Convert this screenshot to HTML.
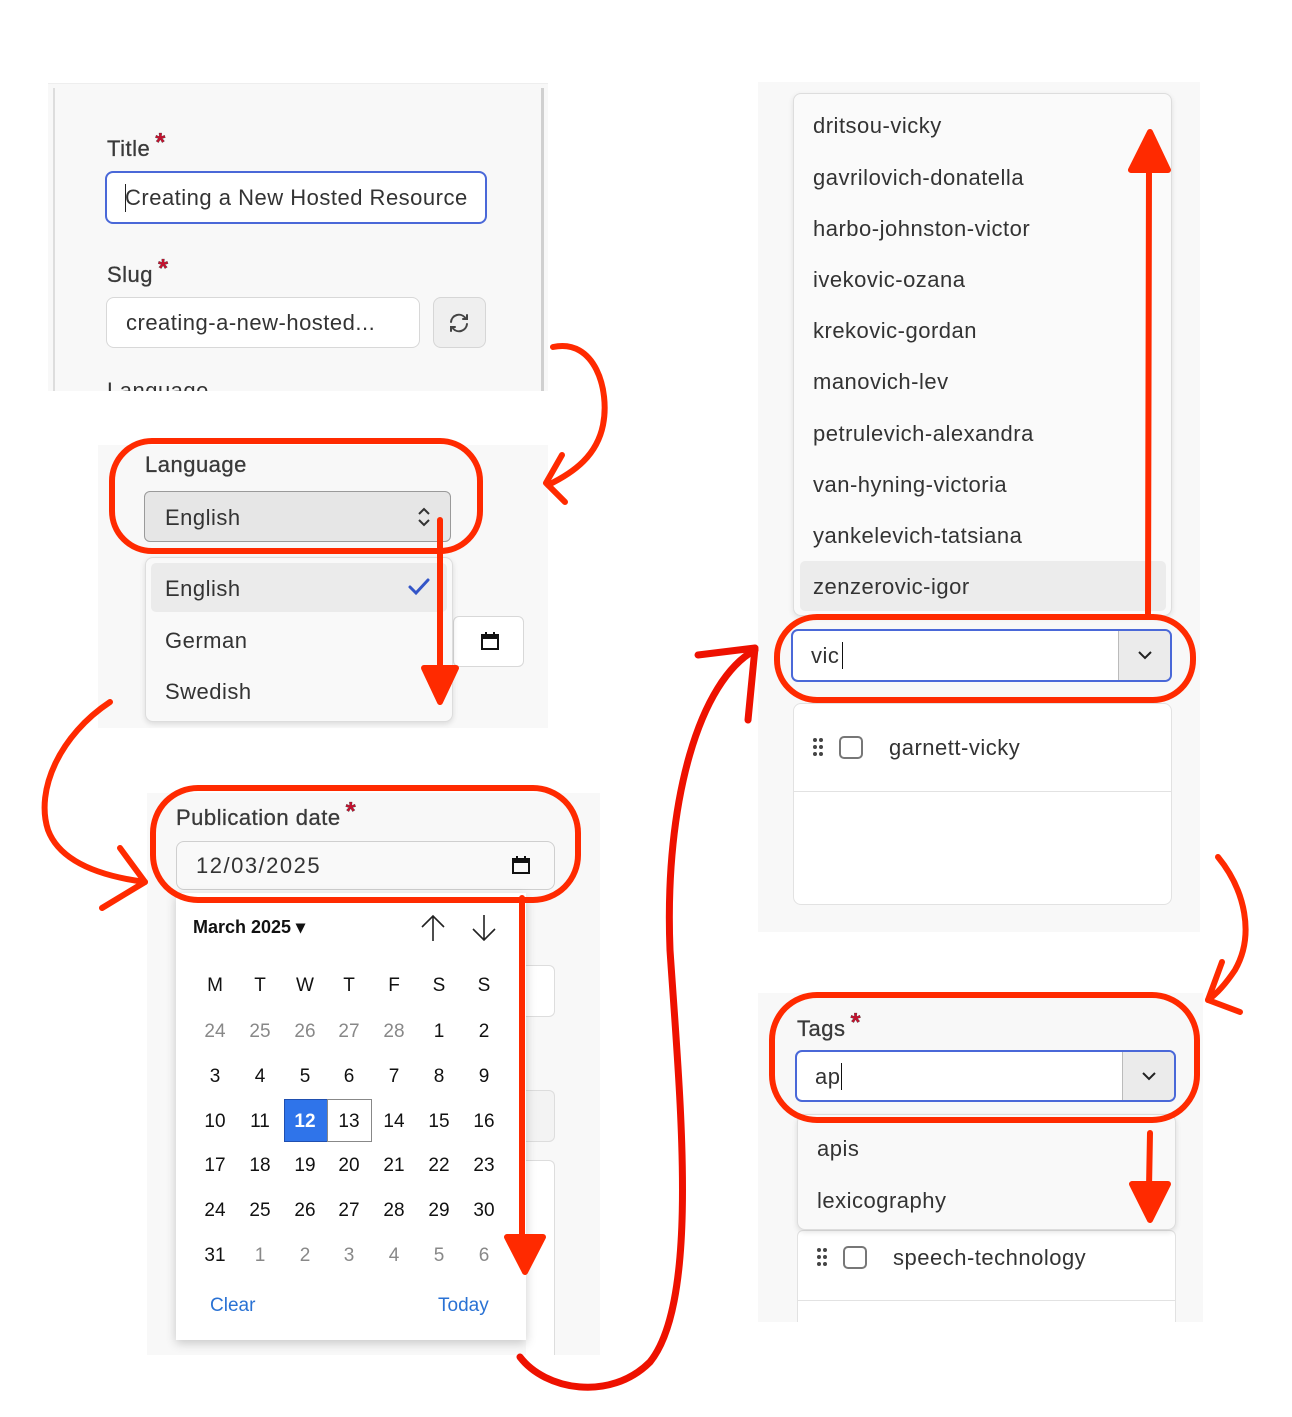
<!DOCTYPE html>
<html><head><meta charset="utf-8"><style>
*{box-sizing:border-box;margin:0;padding:0}
body{width:1292px;height:1417px;background:#fff;position:relative;overflow:hidden;font-family:"Liberation Sans",Arial,sans-serif;color:#333}
.a{position:absolute}
.p{position:absolute;background:#f8f8f8;overflow:hidden}
.lbl{position:absolute;font-size:22px;color:#3a3a3a;letter-spacing:0.5px;-webkit-text-stroke:0.3px #3a3a3a}
.star{color:#c8102e;font-size:26px;font-weight:bold;position:relative;top:-5px;margin-left:5px}
.t{position:absolute;font-size:22px;color:#333;white-space:nowrap;letter-spacing:0.5px}
.cal div{position:absolute;width:44px;text-align:center;font-size:19px;color:#111}
.cal .g{color:#888}
</style></head><body>

<!-- Panel 1 -->
<div class="p" style="left:48px;top:83px;width:500px;height:308px;border-top:1px solid #eee"></div>
<div class="a" style="left:53px;top:88px;width:2px;height:303px;background:#ddd"></div>
<div class="a" style="left:541px;top:88px;width:3px;height:303px;background:#d0d0d0"></div>
<div class="lbl" style="left:107px;top:132px">Title<span class="star">*</span></div>
<div class="a" style="left:105px;top:171px;width:382px;height:53px;border:2px solid #4a68d8;border-radius:8px;background:#fff"></div>
<div class="t" style="left:125px;top:185px;width:343px;overflow:hidden">Creating a New Hosted Resource</div>
<div class="a" style="left:125px;top:184px;width:1px;height:28px;background:#222"></div>
<div class="lbl" style="left:107px;top:258px">Slug<span class="star">*</span></div>
<div class="a" style="left:106px;top:297px;width:314px;height:51px;border:1px solid #d8d8d8;border-radius:8px;background:#fff"></div>
<div class="t" style="left:126px;top:310px">creating-a-new-hosted...</div>
<div class="a" style="left:433px;top:297px;width:53px;height:51px;border:1px solid #d6d6d6;border-radius:8px;background:#efefef"></div>
<svg class="a" style="left:447px;top:311px" width="24" height="24" viewBox="0 0 24 24" fill="none" stroke="#444" stroke-width="2" stroke-linecap="round"><path d="M4 11a8 8 0 0 1 14-4.5M20 4v4h-4M20 13a8 8 0 0 1-14 4.5M4 20v-4h4"/></svg>
<div class="t" style="left:107px;top:378px;height:13px;overflow:hidden">Language</div>

<!-- Panel 2 -->
<div class="p" style="left:98px;top:445px;width:450px;height:283px"></div>
<div class="lbl" style="left:145px;top:452px">Language</div>
<div class="a" style="left:144px;top:491px;width:307px;height:51px;border:1px solid #9a9a9a;border-radius:6px;background:#e6e6e6"></div>
<div class="t" style="left:165px;top:505px">English</div>
<svg class="a" style="left:415px;top:505px" width="18" height="24" viewBox="0 0 18 24" fill="none" stroke="#333" stroke-width="2"><path d="M4 9l5-5 5 5M4 15l5 5 5-5"/></svg>
<div class="a" style="left:453px;top:616px;width:71px;height:51px;border:1px solid #d8d8d8;border-radius:6px;background:#fff"></div>
<svg class="a" style="left:480px;top:631px" width="20" height="20" viewBox="0 0 20 20"><rect x="2" y="4" width="16" height="14" fill="none" stroke="#111" stroke-width="2"/><rect x="2" y="4" width="16" height="4" fill="#111"/><rect x="5" y="1" width="2" height="4" fill="#111"/><rect x="13" y="1" width="2" height="4" fill="#111"/></svg>
<div class="a" style="left:145px;top:557px;width:308px;height:165px;border:1px solid #ddd;border-radius:8px;background:#f9f9f9;box-shadow:0 2px 6px rgba(0,0,0,.12)"></div>
<div class="a" style="left:151px;top:563px;width:296px;height:49px;border-radius:5px;background:#ebebeb"></div>
<div class="t" style="left:165px;top:576px">English</div>
<svg class="a" style="left:407px;top:576px" width="24" height="22" viewBox="0 0 24 22" fill="none" stroke="#3355c8" stroke-width="3" stroke-linecap="round"><path d="M3 11l6 6L21 4"/></svg>
<div class="t" style="left:165px;top:628px">German</div>
<div class="t" style="left:165px;top:679px">Swedish</div>

<!-- Panel 3 -->
<div class="p" style="left:147px;top:793px;width:453px;height:562px">
<div class="a" style="left:379px;top:172px;width:29px;height:52px;border:1px solid #ddd;border-left:none;border-radius:0 6px 6px 0;background:#fff"></div>
<div class="a" style="left:379px;top:297px;width:29px;height:52px;border:1px solid #ddd;border-left:none;border-radius:0 6px 6px 0;background:#f3f3f3"></div>
<div class="a" style="left:379px;top:367px;width:29px;height:220px;border:1px solid #ddd;border-left:none;border-radius:0 6px 0 0;background:#fff"></div>
</div>
<div class="lbl" style="left:176px;top:801px">Publication date<span class="star">*</span></div>
<div class="a" style="left:176px;top:841px;width:379px;height:49px;border:1px solid #cfcfcf;border-radius:8px;background:#f9f9f9"></div>
<div class="t" style="left:196px;top:853px;letter-spacing:1.5px">12/03/2025</div>
<svg class="a" style="left:511px;top:855px" width="20" height="20" viewBox="0 0 20 20"><rect x="2" y="4" width="16" height="14" fill="none" stroke="#111" stroke-width="2"/><rect x="2" y="4" width="16" height="4" fill="#111"/><rect x="5" y="1" width="2" height="4" fill="#111"/><rect x="13" y="1" width="2" height="4" fill="#111"/></svg>
<div class="a cal" style="left:176px;top:893px;width:350px;height:447px;background:#fff;box-shadow:0 3px 10px rgba(0,0,0,.2)">
<span class="a" style="left:17px;top:24px;font-size:18px;font-weight:bold;color:#111;white-space:nowrap">March 2025 &#9662;</span>
<svg class="a" style="left:243px;top:20px" width="28" height="30" viewBox="0 0 28 30" fill="none" stroke="#222" stroke-width="1.6"><path d="M14 28V3M3 14L14 3l11 11"/></svg>
<svg class="a" style="left:294px;top:20px" width="28" height="30" viewBox="0 0 28 30" fill="none" stroke="#222" stroke-width="1.6"><path d="M14 2v25M3 16l11 11 11-11"/></svg>
<div style="left:17px;top:82px">M</div><div style="left:62px;top:82px">T</div><div style="left:107px;top:82px">W</div><div style="left:151px;top:82px">T</div><div style="left:196px;top:82px">F</div><div style="left:241px;top:82px">S</div><div style="left:286px;top:82px">S</div>
<div class="g" style="left:17px;top:128px">24</div><div class="g" style="left:62px;top:128px">25</div><div class="g" style="left:107px;top:128px">26</div><div class="g" style="left:151px;top:128px">27</div><div class="g" style="left:196px;top:128px">28</div><div style="left:241px;top:128px">1</div><div style="left:286px;top:128px">2</div>
<div style="left:17px;top:173px">3</div><div style="left:62px;top:173px">4</div><div style="left:107px;top:173px">5</div><div style="left:151px;top:173px">6</div><div style="left:196px;top:173px">7</div><div style="left:241px;top:173px">8</div><div style="left:286px;top:173px">9</div>
<div style="left:108px;top:206px;width:44px;height:43px;background:#2f74ea;border:1px solid #1f4fb0"></div>
<div style="left:151px;top:206px;width:45px;height:43px;border:1px solid #888"></div>
<div style="left:17px;top:218px">10</div><div style="left:62px;top:218px">11</div><div style="left:107px;top:218px;color:#fff;font-weight:bold">12</div><div style="left:151px;top:218px">13</div><div style="left:196px;top:218px">14</div><div style="left:241px;top:218px">15</div><div style="left:286px;top:218px">16</div>
<div style="left:17px;top:262px">17</div><div style="left:62px;top:262px">18</div><div style="left:107px;top:262px">19</div><div style="left:151px;top:262px">20</div><div style="left:196px;top:262px">21</div><div style="left:241px;top:262px">22</div><div style="left:286px;top:262px">23</div>
<div style="left:17px;top:307px">24</div><div style="left:62px;top:307px">25</div><div style="left:107px;top:307px">26</div><div style="left:151px;top:307px">27</div><div style="left:196px;top:307px">28</div><div style="left:241px;top:307px">29</div><div style="left:286px;top:307px">30</div>
<div style="left:17px;top:352px">31</div><div class="g" style="left:62px;top:352px">1</div><div class="g" style="left:107px;top:352px">2</div><div class="g" style="left:151px;top:352px">3</div><div class="g" style="left:196px;top:352px">4</div><div class="g" style="left:241px;top:352px">5</div><div class="g" style="left:286px;top:352px">6</div>
<span class="a" style="left:34px;top:402px;font-size:19px;color:#2a72d4">Clear</span>
<span class="a" style="left:262px;top:402px;font-size:19px;color:#2a72d4">Today</span>
</div>

<!-- Panel 4 -->
<div class="p" style="left:758px;top:82px;width:442px;height:850px"></div>
<div class="a" style="left:793px;top:93px;width:379px;height:523px;border:1px solid #ddd;border-radius:8px;background:#fafafa;box-shadow:0 2px 6px rgba(0,0,0,.1)"></div>
<div class="a" style="left:800px;top:561px;width:366px;height:50px;border-radius:5px;background:#ececec"></div>
<div class="t" style="left:813px;top:113px">dritsou-vicky</div>
<div class="t" style="left:813px;top:165px">gavrilovich-donatella</div>
<div class="t" style="left:813px;top:216px">harbo-johnston-victor</div>
<div class="t" style="left:813px;top:267px">ivekovic-ozana</div>
<div class="t" style="left:813px;top:318px">krekovic-gordan</div>
<div class="t" style="left:813px;top:369px">manovich-lev</div>
<div class="t" style="left:813px;top:421px">petrulevich-alexandra</div>
<div class="t" style="left:813px;top:472px">van-hyning-victoria</div>
<div class="t" style="left:813px;top:523px">yankelevich-tatsiana</div>
<div class="t" style="left:813px;top:574px">zenzerovic-igor</div>
<div class="a" style="left:791px;top:629px;width:381px;height:53px;border:2px solid #4a68d8;border-radius:7px;background:#fff;overflow:hidden"><div class="a" style="right:0;top:0;width:52px;height:100%;background:#ebebeb;border-left:1px solid #bbb"></div></div>
<svg class="a" style="left:1136px;top:648px" width="18" height="14" viewBox="0 0 18 14" fill="none" stroke="#222" stroke-width="2"><path d="M3 4l6 6 6-6"/></svg>
<div class="t" style="left:811px;top:643px">vic</div>
<div class="a" style="left:842px;top:642px;width:1px;height:27px;background:#111"></div>
<div class="a" style="left:793px;top:703px;width:379px;height:202px;border:1px solid #e2e2e2;border-radius:8px;background:#fff"></div>
<div class="a" style="left:793px;top:791px;width:379px;height:1px;background:#e2e2e2"></div>
<svg class="a" style="left:812px;top:737px" width="12" height="20" viewBox="0 0 12 20" fill="#444"><circle cx="3" cy="3" r="2"/><circle cx="9" cy="3" r="2"/><circle cx="3" cy="10" r="2"/><circle cx="9" cy="10" r="2"/><circle cx="3" cy="17" r="2"/><circle cx="9" cy="17" r="2"/></svg>
<div class="a" style="left:839px;top:736px;width:24px;height:23px;border:2px solid #777;border-radius:5px"></div>
<div class="t" style="left:889px;top:735px">garnett-vicky</div>

<!-- Panel 5 -->
<div class="p" style="left:758px;top:993px;width:445px;height:329px">
<div class="a" style="left:39px;top:237px;width:379px;height:120px;border:1px solid #e2e2e2;border-radius:6px;background:#fff"></div>
<div class="a" style="left:39px;top:307px;width:379px;height:1px;background:#e2e2e2"></div>
</div>
<div class="lbl" style="left:797px;top:1012px">Tags<span class="star">*</span></div>
<svg class="a" style="left:816px;top:1247px" width="12" height="20" viewBox="0 0 12 20" fill="#444"><circle cx="3" cy="3" r="2"/><circle cx="9" cy="3" r="2"/><circle cx="3" cy="10" r="2"/><circle cx="9" cy="10" r="2"/><circle cx="3" cy="17" r="2"/><circle cx="9" cy="17" r="2"/></svg>
<div class="a" style="left:843px;top:1246px;width:24px;height:23px;border:2px solid #777;border-radius:5px"></div>
<div class="t" style="left:893px;top:1245px">speech-technology</div>
<div class="a" style="left:797px;top:1114px;width:379px;height:116px;border:1px solid #ddd;border-radius:8px;background:#f9f9f9;box-shadow:0 2px 6px rgba(0,0,0,.12)"></div>
<div class="t" style="left:817px;top:1136px">apis</div>
<div class="t" style="left:817px;top:1188px">lexicography</div>
<div class="a" style="left:795px;top:1050px;width:381px;height:52px;border:2px solid #4a68d8;border-radius:7px;background:#fff;overflow:hidden"><div class="a" style="right:0;top:0;width:52px;height:100%;background:#ebebeb;border-left:1px solid #bbb"></div></div>
<svg class="a" style="left:1140px;top:1069px" width="18" height="14" viewBox="0 0 18 14" fill="none" stroke="#222" stroke-width="2"><path d="M3 4l6 6 6-6"/></svg>
<div class="t" style="left:815px;top:1064px">ap</div>
<div class="a" style="left:841px;top:1063px;width:1px;height:27px;background:#111"></div>

<!-- Annotations -->
<svg class="a" style="left:0;top:0" width="1292" height="1417" viewBox="0 0 1292 1417" fill="none" stroke="#ff2a00" stroke-width="6" stroke-linecap="round" stroke-linejoin="round">
<path d="M553,347 C595,338 610,390 603,425 C597,455 575,472 548,485"/>
<path d="M562,455 L546,483 L565,502"/>
<rect x="112" y="441" width="368" height="110" rx="40"/>
<path d="M440,520 L440,672"/>
<path d="M424,668 L456,668 L440,702 Z" fill="#ff2a00"/>
<path d="M110,702 C60,735 35,790 48,830 C60,862 100,876 145,882"/>
<path d="M120,848 L145,882 L102,908"/>
<rect x="153" y="788" width="425" height="112" rx="45"/>
<path d="M522,898 L522,1240"/>
<path d="M507,1237 L543,1237 L525,1272 Z" fill="#ff2a00"/>
<path d="M520,1357 C545,1390 610,1402 650,1362 C700,1300 680,1100 670,950 C664,800 700,680 755,650" stroke="#ee1100" stroke-width="7"/>
<path d="M698,655 L755,648 L748,720" stroke="#ee1100" stroke-width="7"/>
<rect x="777" y="617" width="416" height="83" rx="40"/>
<path d="M1148,616 L1149,165"/>
<path d="M1131,170 L1168,170 L1150,132 Z" fill="#ff2a00"/>
<path d="M1218,857 C1245,890 1255,935 1235,970 C1225,985 1215,995 1208,1000"/>
<path d="M1222,962 L1208,1000 L1240,1012"/>
<rect x="772" y="995" width="425" height="125" rx="45"/>
<path d="M1150,1133 L1149,1188"/>
<path d="M1132,1184 L1168,1184 L1150,1220 Z" fill="#ff2a00"/>
</svg>
</body></html>
